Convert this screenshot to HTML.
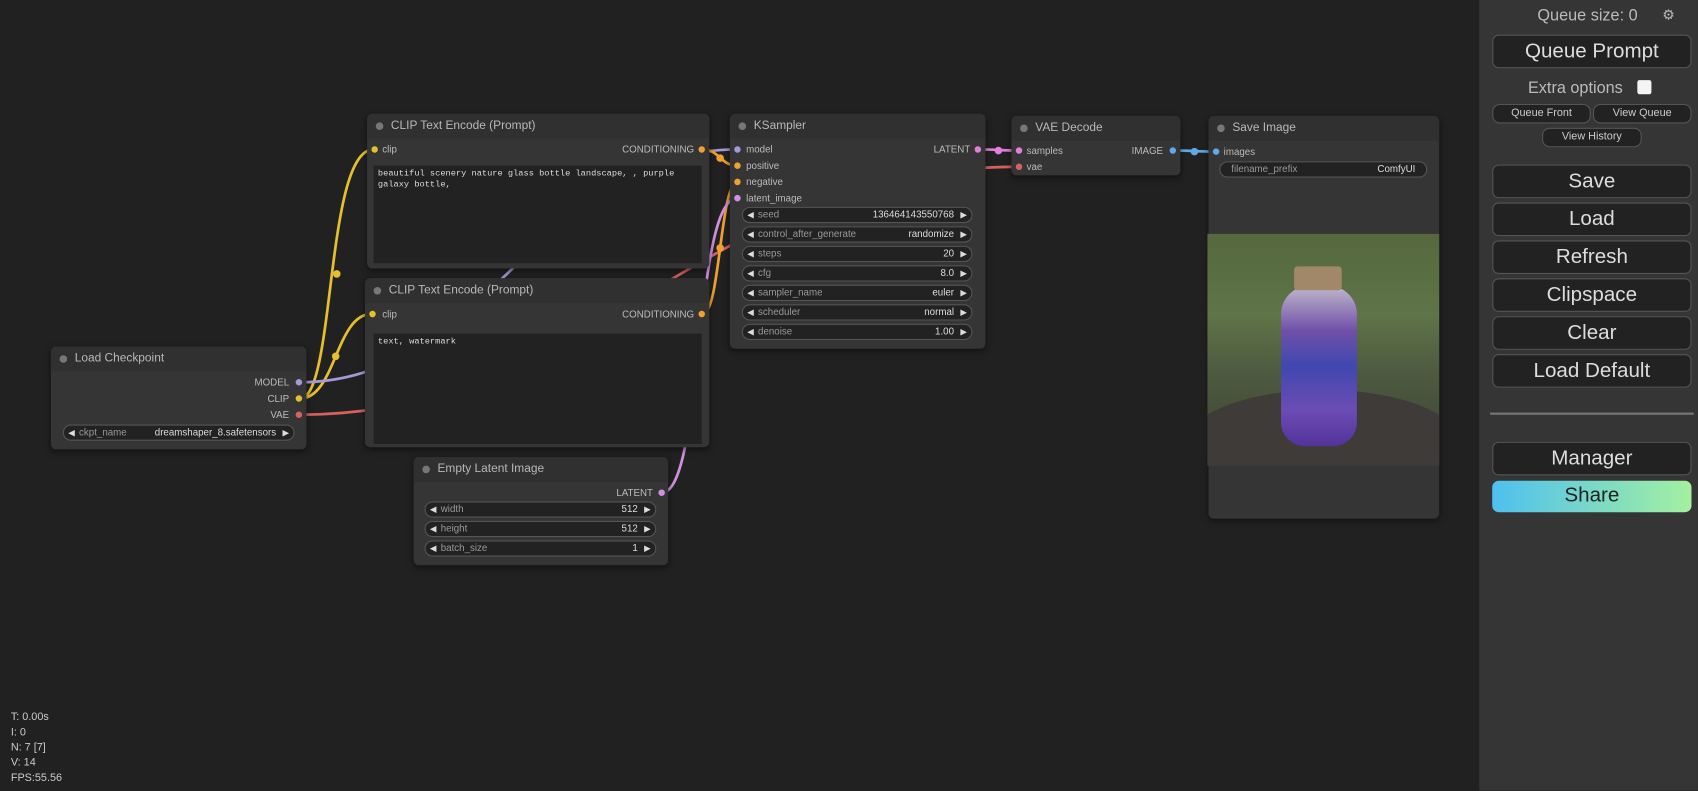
<!DOCTYPE html>
<html><head><meta charset="utf-8"><style>
html,body{margin:0;padding:0;width:1698px;height:790px;overflow:hidden;background:#222;font-family:"Liberation Sans",sans-serif}
#w{position:absolute;left:0;top:0;width:1568px;height:730px;transform:scale(1.0829);transform-origin:0 0;background:#212121}
.n{position:absolute;background:#353535;border-radius:5px;box-shadow:0 2px 6px rgba(0,0,0,.5)}
.t{position:absolute;left:0;right:0;top:0;height:23px;background:#303030;border-radius:5px 5px 0 0;color:#b8b8b8;font-size:11px;line-height:23px;padding-left:22px}
.t:before{content:"";position:absolute;left:8px;top:8px;width:7px;height:7px;border-radius:50%;background:#777}
.s{position:absolute;font-size:9px;color:#bbb;line-height:10px}
.d{position:absolute;width:6px;height:6px;border-radius:50%}
.wg{position:absolute;height:13px;border:1px solid #555;border-radius:8px;background:#222;font-size:9px;line-height:13px;color:#999}
.wg .l{position:absolute;left:14px}
.wg .v{position:absolute;right:16px;color:#ddd}
.wg.a:before{content:"◀";position:absolute;left:4px;color:#ddd;font-size:8px}
.wg.a:after{content:"▶";position:absolute;right:4px;color:#ddd;font-size:8px}
.ta{position:absolute;background:#222;color:#ddd;font-family:"Liberation Mono",monospace;font-size:8px;line-height:10px;padding:3px 4px;box-sizing:border-box}
.b{position:absolute;left:1378px;width:184px;height:31px;box-sizing:border-box;border:1px solid #555;border-radius:6px;background:#222;color:#ddd;font-size:19px;text-align:center;line-height:29px}
.sb{position:absolute;height:18px;box-sizing:border-box;border:1px solid #555;border-radius:7px;background:#222;color:#ccc;font-size:10px;text-align:center;line-height:16px}
.st{position:absolute;left:10px;color:#ccc;font-size:10px;line-height:14px}
</style></head><body><div id="w">
<svg width="1366" height="730" style="position:absolute;left:0;top:0" fill="none" stroke-width="2.5">
<path d="M277 368 C310 368 300 138 345 138" stroke="#e6c02c"/>
<path d="M277 368 C310 368 310 290 343 290" stroke="#e6c02c"/>
<path d="M277 353 C450 353 500 138 681 138" stroke="#a49ad8"/>
<path d="M277 383 C550 383 650 154 941 154" stroke="#d86060"/>
<path d="M648 138 C665 138 665 153 681 153" stroke="#f0a030"/>
<path d="M649 290 C665 290 665 168 681 168" stroke="#f0a030"/>
<path d="M611 455 C650 455 640 183 681 183" stroke="#d090e0"/>
<path d="M903 138 C920 138 925 139 941 139" stroke="#e080d8"/>
<path d="M1084 139 C1100 139 1105 140 1122 140" stroke="#60a8e8"/>
<circle cx="311" cy="253" r="3.5" fill="#e6c02c" stroke="none"/>
<circle cx="310" cy="329" r="3.5" fill="#e6c02c" stroke="none"/>
<circle cx="665" cy="146" r="3.5" fill="#f0a030" stroke="none"/>
<circle cx="665" cy="229" r="3.5" fill="#f0a030" stroke="none"/>
<circle cx="922" cy="139" r="3.5" fill="#e080d8" stroke="none"/>
<circle cx="1103" cy="140" r="3.5" fill="#60a8e8" stroke="none"/>
</svg>

<div class="n" style="left:47px;top:320px;width:236px;height:95px"><div class="t">Load Checkpoint</div>
<div class="s" style="right:16px;top:28px">MODEL</div><div class="d" style="right:4px;top:30px;background:#a49ad8"></div>
<div class="s" style="right:16px;top:43px">CLIP</div><div class="d" style="right:4px;top:45px;background:#e6c02c"></div>
<div class="s" style="right:16px;top:58px">VAE</div><div class="d" style="right:4px;top:60px;background:#d86060"></div>
<div class="wg a" style="left:11px;top:72px;width:212px"><span class="l">ckpt_name</span><span class="v">dreamshaper_8.safetensors</span></div></div>

<div class="n" style="left:339px;top:105px;width:316px;height:143px"><div class="t">CLIP Text Encode (Prompt)</div>
<div class="d" style="left:4px;top:30px;background:#e6c02c"></div><div class="s" style="left:14px;top:28px">clip</div>
<div class="s" style="right:14px;top:28px">CONDITIONING</div><div class="d" style="right:4px;top:30px;background:#f0a030"></div>
<div class="ta" style="left:6px;top:48px;width:303px;height:90px">beautiful scenery nature glass bottle landscape, , purple galaxy bottle,</div></div>

<div class="n" style="left:337px;top:257px;width:318px;height:156px"><div class="t">CLIP Text Encode (Prompt)</div>
<div class="d" style="left:4px;top:30px;background:#e6c02c"></div><div class="s" style="left:16px;top:28px">clip</div>
<div class="s" style="right:14px;top:28px">CONDITIONING</div><div class="d" style="right:4px;top:30px;background:#f0a030"></div>
<div class="ta" style="left:8px;top:51px;width:303px;height:102px">text, watermark</div></div>

<div class="n" style="left:382px;top:422px;width:235px;height:100px"><div class="t">Empty Latent Image</div>
<div class="s" style="right:14px;top:28px">LATENT</div><div class="d" style="right:3px;top:30px;background:#d090e0"></div>
<div class="wg a" style="left:10px;top:41px;width:212px"><span class="l">width</span><span class="v">512</span></div>
<div class="wg a" style="left:10px;top:59px;width:212px"><span class="l">height</span><span class="v">512</span></div>
<div class="wg a" style="left:10px;top:77px;width:212px"><span class="l">batch_size</span><span class="v">1</span></div></div>

<div class="n" style="left:674px;top:105px;width:236px;height:217px"><div class="t">KSampler</div>
<div class="d" style="left:4px;top:30px;background:#a49ad8"></div><div class="s" style="left:15px;top:28px">model</div>
<div class="s" style="right:14px;top:28px">LATENT</div><div class="d" style="right:4px;top:30px;background:#e080d8"></div>
<div class="d" style="left:4px;top:45px;background:#f0a030"></div><div class="s" style="left:15px;top:43px">positive</div>
<div class="d" style="left:4px;top:60px;background:#f0a030"></div><div class="s" style="left:15px;top:58px">negative</div>
<div class="d" style="left:4px;top:75px;background:#d090e0"></div><div class="s" style="left:15px;top:73px">latent_image</div>
<div class="wg a" style="left:11px;top:86px;width:211px"><span class="l">seed</span><span class="v">136464143550768</span></div>
<div class="wg a" style="left:11px;top:104px;width:211px"><span class="l">control_after_generate</span><span class="v">randomize</span></div>
<div class="wg a" style="left:11px;top:122px;width:211px"><span class="l">steps</span><span class="v">20</span></div>
<div class="wg a" style="left:11px;top:140px;width:211px"><span class="l">cfg</span><span class="v">8.0</span></div>
<div class="wg a" style="left:11px;top:158px;width:211px"><span class="l">sampler_name</span><span class="v">euler</span></div>
<div class="wg a" style="left:11px;top:176px;width:211px"><span class="l">scheduler</span><span class="v">normal</span></div>
<div class="wg a" style="left:11px;top:194px;width:211px"><span class="l">denoise</span><span class="v">1.00</span></div></div>

<div class="n" style="left:934px;top:107px;width:156px;height:55px"><div class="t">VAE Decode</div>
<div class="d" style="left:4px;top:29px;background:#e080d8"></div><div class="s" style="left:14px;top:27px">samples</div>
<div class="s" style="right:16px;top:27px">IMAGE</div><div class="d" style="right:4px;top:29px;background:#60a8e8"></div>
<div class="d" style="left:4px;top:44px;background:#d86060"></div><div class="s" style="left:14px;top:42px">vae</div></div>

<div class="n" style="left:1116px;top:107px;width:213px;height:372px"><div class="t">Save Image</div>
<div class="d" style="left:4px;top:30px;background:#60a8e8"></div><div class="s" style="left:14px;top:28px">images</div>
<div class="wg" style="left:10px;top:42px;width:190px"><span style="position:absolute;left:10px">filename_prefix</span><span style="position:absolute;right:10px;color:#ddd">ComfyUI</span></div>
<div style="position:absolute;left:-1px;top:109px;width:214px;height:214px;background:linear-gradient(180deg,#55683e 0%,#5f7448 35%,#4d5a40 60%,#3c4232 100%);overflow:hidden">
<div style="position:absolute;left:-20px;right:-20px;bottom:-30px;height:100px;background:#3f3b39;border-radius:50%"></div>
<div style="position:absolute;left:68px;top:48px;width:70px;height:148px;border-radius:26px 26px 22px 22px;background:linear-gradient(180deg,#c0b8cc 0%,#7050a8 28%,#4048b0 50%,#6c4cb4 78%,#52339a 100%)"></div>
<div style="position:absolute;left:80px;top:30px;width:44px;height:22px;background:#a08868;border-radius:3px"></div>
</div></div>

<div style="position:absolute;left:1366px;top:0;width:202px;height:730px;background:#353535"></div>
<div style="position:absolute;left:1366px;top:6px;width:200px;text-align:center;color:#bbb;font-size:15px">Queue size: 0</div>
<div style="position:absolute;left:1535px;top:6px;color:#bbb;font-size:13px">⚙</div>
<div class="b" style="top:32px">Queue Prompt</div>
<div style="position:absolute;left:1411px;top:73px;color:#bbb;font-size:15px">Extra options</div>
<div style="position:absolute;left:1512px;top:74px;width:13px;height:13px;background:#f4f4f4;border-radius:2px"></div>
<div class="sb" style="left:1378px;top:96px;width:91px">Queue Front</div>
<div class="sb" style="left:1471px;top:96px;width:91px">View Queue</div>
<div class="sb" style="left:1424px;top:118px;width:92px">View History</div>
<div class="b" style="top:152px">Save</div>
<div class="b" style="top:187px">Load</div>
<div class="b" style="top:222px">Refresh</div>
<div class="b" style="top:257px">Clipspace</div>
<div class="b" style="top:292px">Clear</div>
<div class="b" style="top:327px">Load Default</div>
<div style="position:absolute;left:1376px;top:381px;width:188px;height:2px;background:#777"></div>
<div class="b" style="top:408px">Manager</div>
<div class="b" style="top:444px;height:29px;line-height:27px;background:linear-gradient(90deg,#4ec0f0,#a4f0a0);color:#222;border:none">Share</div>

<div class="st" style="top:656px">T: 0.00s</div>
<div class="st" style="top:670px">I: 0</div>
<div class="st" style="top:684px">N: 7 [7]</div>
<div class="st" style="top:698px">V: 14</div>
<div class="st" style="top:712px">FPS:55.56</div>
</div></body></html>
